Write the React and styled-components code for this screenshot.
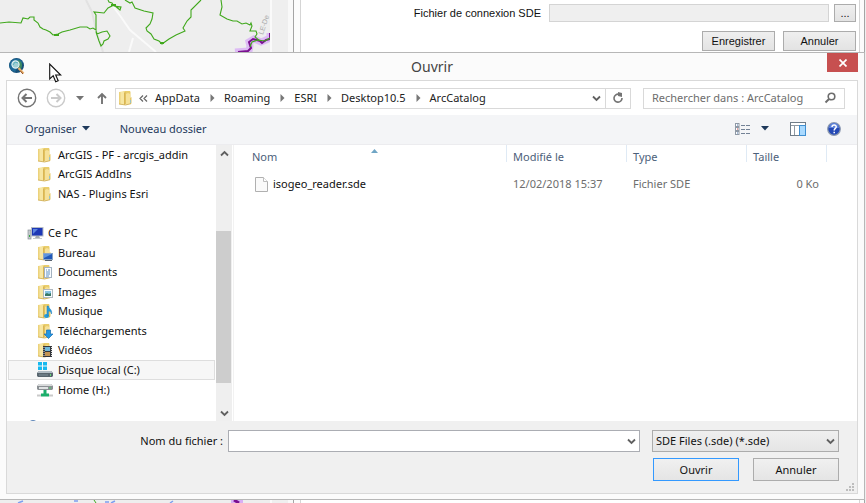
import React from "react";
import styled, { createGlobalStyle, css } from "styled-components";

const ui = `"Noto Sans", "Open Sans", sans-serif`;
const classic = `"Liberation Sans", Arial, sans-serif`;

const GlobalStyle = createGlobalStyle`
  *, *::before, *::after { box-sizing: border-box; }
  body { margin: 0; background: #efefef; }
  button, input, select { font: inherit; color: inherit; margin: 0; border-radius: 0; }
  svg { display: block; flex: none; }
`;

const Page = styled.div`
  display: flex;
  flex-direction: column;
  height: 100vh;
  overflow: hidden;
  font: 11px/16px ${ui};
  color: #111;
`;

/* ---------- application behind the dialog ---------- */

const Backdrop = styled.div`
  display: flex;
  flex: none;
  height: ${(p) => p.$height}px;
  overflow: hidden;
`;

const Gutter = styled.div`
  width: 23px;
  flex: none;
  background: #efefef;
  border-left: 2px solid #fafafa;
  border-right: 5px solid #f9f9f9;
`;

const SidePane = styled.div`
  flex: 1;
  display: flex;
  padding: 0 1px 0 6px;
  margin-right: 1px;
  background: #fcfcfc;
  border-left: 1px solid #a5a5a5;
  border-right: 1px solid #a5a5a5;
`;

const Form = styled.form`
  flex: 1;
  display: flex;
  flex-direction: column;
  gap: 9px;
  padding: 4px 3px 0;
  margin-right: 3px;
  background: #fff;
  border-left: 1px solid #d5d5d5;
  border-right: 1px solid #d5d5d5;
  font: 11px/16px ${classic};
`;

const FormRow = styled.div`
  display: flex;
  justify-content: flex-end;
  align-items: center;
  gap: ${(p) => p.$gap}px;
`;

const PathInput = styled.input`
  width: 280px;
  height: 18px;
  margin-left: 3px;
  padding: 0 4px;
  background: #efefef;
  border: 1px solid #d4d4d4;
`;

const ClassicButton = styled.button`
  width: ${(p) => p.$width}px;
  height: ${(p) => p.$height}px;
  padding: 0;
  line-height: 14px;
  background: linear-gradient(#efefef, #e3e3e3);
  border: 1px solid #acacac;
`;

/* ---------- dialog ---------- */

const Dialog = styled.section`
  flex: 1;
  min-height: 0;
  display: flex;
  flex-direction: column;
  position: relative;
  margin-right: 1px;
  padding: 0 6px 5px;
  background: #fbfbfb;
  border-top: 1px solid #b7b7b7;
  border-right: 1px solid #b7b7b7;
  border-bottom: 1px solid #b7b7b7;
`;

const TitleBar = styled.header`
  flex: none;
  height: 27px;
  display: grid;
  grid-template-columns: 1fr auto 1fr;
`;

const AppIconCell = styled.div`
  padding: 5px 2px;
`;

const Title = styled.h1`
  margin: 0;
  font: 14px/28px ${ui};
  color: #444;
`;

const CloseButton = styled.button`
  justify-self: end;
  width: 31px;
  height: 19px;
  padding: 0;
  display: flex;
  align-items: center;
  justify-content: center;
  background: #c75050;
  border: 0;
`;

const Pointer = styled.svg`
  position: absolute;
  left: 49px;
  top: 10px;
`;

const Frame = styled.div`
  flex: 1;
  min-height: 0;
  display: flex;
  flex-direction: column;
  background: #fff;
  border: 1px solid #d9d9d9;
`;

const NavRow = styled.div`
  flex: none;
  display: flex;
  align-items: center;
  height: 34px;
  padding: 0 12px 0 10px;
`;

const IconButton = styled.button`
  flex: none;
  display: flex;
  align-items: center;
  justify-content: center;
  width: ${(p) => p.$width || 20}px;
  height: 20px;
  padding: 0;
  background: none;
  border: 0;
`;

const HistoryButtons = styled.div`
  display: flex;
  align-items: center;
  width: 98px;
`;

const Address = styled.nav`
  flex: 1;
  display: flex;
  align-items: center;
  height: 21px;
  padding-left: 2px;
  border: 1px solid #d9d9d9;
`;

const Crumb = styled.button`
  padding: 0;
  line-height: 16px;
  color: #222;
  background: none;
  border: 0;
`;

const CrumbArrow = styled.svg`
  margin: 0 9px 0 10px;
`;

const Ancestors = styled.span`
  margin: 0 7px 0 5px;
`;

const RefreshCell = styled.div`
  margin-left: auto;
  display: flex;
  height: 19px;
  align-items: center;
`;

const Divider = styled.div`
  width: 1px;
  height: 19px;
  background: #d9d9d9;
`;

const Search = styled.label`
  display: flex;
  align-items: center;
  width: 202px;
  height: 21px;
  margin-left: 12px;
  padding: 0 8px;
  border: 1px solid #d9d9d9;
`;

const SearchInput = styled.input`
  flex: 1;
  min-width: 0;
  padding: 0;
  background: none;
  border: 0;
  outline: 0;
  &::placeholder { color: #6d6d6d; opacity: 1; }
`;

const Toolbar = styled.div`
  flex: none;
  display: flex;
  align-items: center;
  height: 30px;
  padding: 0 8px 2px 18px;
  background: #f4f5f7;
  border-bottom: 1px solid #ececef;
  color: #1e395b;
`;

const ToolButton = styled.button`
  display: flex;
  align-items: center;
  gap: 5px;
  padding: 0;
  margin-right: 30px;
  background: none;
  border: 0;
`;

const ViewTools = styled.div`
  margin-left: auto;
  display: flex;
  align-items: center;
`;

const Body = styled.div`
  flex: 1;
  min-height: 0;
  display: flex;
`;

const Sidebar = styled.nav`
  flex: none;
  display: flex;
  width: 227px;
  border-right: 1px solid #f2f2f2;
`;

const Tree = styled.ul`
  flex: 1;
  display: grid;
  grid-template-rows: repeat(14, 1fr) 2px;
  min-height: 0;
  margin: 0;
  padding: 0 1px;
  overflow: hidden;
  list-style: none;
`;

const TreeRow = styled.li`
  display: flex;
  min-height: 0;
  overflow: hidden;
  border: 1px solid transparent;
  ${(p) => p.$selected && css`
    background: #f7f7f7;
    border-color: #dedede;
  `}
`;

const TreeButton = styled.button`
  flex: 1;
  display: flex;
  align-items: center;
  gap: ${(p) => (p.$root ? 4 : 5)}px;
  padding: 0 0 0 ${(p) => (p.$root ? 18 : 28)}px;
  line-height: 16px;
  text-align: left;
  background: none;
  border: 0;
`;

const PeekRow = styled.li`
  padding-left: 21px;
`;

const ScrollBar = styled.div`
  display: flex;
  flex-direction: column;
  width: 16px;
  margin-right: 1px;
  background: #efefef;
`;

const ScrollStep = styled.button`
  display: flex;
  align-items: center;
  justify-content: center;
  height: 16px;
  padding: 0;
  background: none;
  border: 0;
`;

const Track = styled.div`
  flex: 1;
  display: grid;
  grid-template-rows: 70fr 152fr 22fr;
`;

const Thumb = styled.div`
  grid-row: 2;
  margin-right: 1px;
  background: #cdcdcd;
`;

const Listing = styled.div`
  flex: 1;
  min-width: 0;
`;

const FileTable = styled.table`
  width: 100%;
  table-layout: fixed;
  border-collapse: collapse;
  text-align: left;
`;

const Col = styled.col`
  width: ${(p) => (p.$width ? `${p.$width}px` : "auto")};
`;

const HeadCell = styled.th`
  height: 24px;
  padding: 0 6px 0 ${(p) => (p.$first ? 18 : 7)}px;
  font-weight: 400;
  color: #4c607a;
  background: linear-gradient(#dfeaf5, #dfeaf5) left top / ${(p) => (p.$first ? 0 : 1)}px 17px no-repeat;
`;

const HeadLabel = styled.span`
  display: flex;
  align-items: center;
  justify-content: space-between;
`;

const SortMark = styled.svg`
  align-self: flex-start;
  margin: 0 auto 0 94px;
`;

const Cell = styled.td`
  height: 30px;
  padding: 0 7px 0 ${(p) => (p.$first ? 21 : 7)}px;
  color: ${(p) => (p.$first ? "#111" : "#6d6d6d")};
  text-align: ${(p) => (p.$right ? "right" : "left")};
`;

const FileName = styled.span`
  display: flex;
  align-items: center;
  gap: 5px;
`;

const Footer = styled.form`
  flex: none;
  position: relative;
  display: flex;
  flex-direction: column;
  gap: 6px;
  height: 72px;
  padding: 9px 18px 0 16px;
  background: #f0f0f0;
`;

const FooterRow = styled.div`
  display: flex;
  align-items: center;
  justify-content: flex-end;
  gap: ${(p) => p.$gap}px;
`;

const NameLabel = styled.label`
  width: 200px;
  text-align: right;
`;

const NameBox = styled.div`
  flex: 1;
  display: flex;
  align-items: center;
  height: 22px;
  margin-right: 7px;
  background: #fff;
  border: 1px solid #abadb3;
`;

const NameInput = styled.input`
  flex: 1;
  min-width: 0;
  padding: 0 4px;
  background: none;
  border: 0;
  outline: 0;
`;

const TypeBox = styled.div`
  position: relative;
  width: 187px;
  height: 22px;
`;

const TypeSelect = styled.select`
  appearance: none;
  width: 100%;
  height: 22px;
  padding: 0 20px 0 3px;
  background: linear-gradient(#efefef, #e5e5e5);
  border: 1px solid #acacac;
`;

const SelectArrow = styled.svg`
  position: absolute;
  right: 4px;
  top: 8px;
  pointer-events: none;
`;

const DialogButton = styled.button`
  width: 86px;
  height: 23px;
  padding: 0;
  line-height: 20px;
  background: linear-gradient(#f0f0f0, #e5e5e5);
  border: 1px solid ${(p) => (p.$primary ? "#3399ff" : "#acacac")};
`;

const Grip = styled.svg`
  position: absolute;
  right: 3px;
  bottom: 2px;
`;

/* ---------- drawings ---------- */

const MapTop = () => (
  <svg width="270" height="52" viewBox="0 0 270 52" aria-hidden="true">
    <rect width="270" height="52" fill="#eeeeee" />
    <g fill="none" stroke="#fafafa" strokeWidth="2">
      <path d="M86 0 92 12 96 30 103 52" stroke="#e2e2e2" />
      <path d="M112 5 121 17 130 30 143 41 156 52M133 38 129 52" />
    </g>
    <text x="263" y="35" transform="rotate(-72 263 35)" fontFamily="Liberation Sans" fontSize="7" fill="#aaa">LE-De</text>
    <g fill="none" stroke="#d8aef5" strokeWidth="7" opacity=".8">
      <path d="M235 52 249 51 250 46 249 42 254 39 261 42 266 40 270 38V33" />
    </g>
    <path d="M238 52 248 51 251 48 249 42 253 39 260 41 262 43 266 40 270 39V33" fill="none" stroke="#7a1090" strokeWidth="2" />
    <g fill="none" stroke="#40a81c" strokeWidth="1.1">
      <path d="M0 23 9 22 21 23 23 18 28 19 30 17 34 17V20L38 23 40 27 43 29 46 30 50 32 53 35 58 34 62 32 70 30 80 27 87 27 90 29 93 28 96 30 96 15 94 12 104 13 108 8 114 5 120 10 121 7 114 6 112 3 109 2 108 0" />
      <path d="M96 31 97 34 102 32 107 31 110 36 108 39 104 41 103 44 101 46 99 41 96 32" />
      <path d="M125 0 130 3 132 2 135 8 144 11 153 13 152 19 150 24 146 28 147 31 151 34 154 39 159 41 162 44 169 39 176 35 185 31 183 28 187 21 191 17 191 10 201 0" />
      <path d="M221 0 222 7 220 15 227 19 233 21 237 21 242 24 246 23 250 25 251 23 252 26 250 31 256 31 257 34 255 37 260 41 M250 47 252 42 258 40 265 41 270 38" />
      <path d="M54 35h5M160 43h4M111 5h5" strokeWidth="2" />
    </g>
  </svg>
);

const MapBottom = () => (
  <svg width="270" height="3" viewBox="0 0 270 3" aria-hidden="true">
    <rect width="270" height="3" fill="#eeeeee" />
    <path d="M18 3 23 1M74 1h4M105 2h4M111 3l4-2M170 3l3-2" stroke="#7d9ff0" strokeWidth="1.5" />
    <path d="M94 0l2 3" stroke="#40a81c" />
    <path d="M231 1h12" stroke="#d8aef5" strokeWidth="5" />
    <path d="M234 0l5 3" stroke="#7a1090" strokeWidth="3" />
  </svg>
);

const Globe = () => (
  <svg width="17" height="17" viewBox="0 0 17 17" aria-hidden="true">
    <circle cx="8.5" cy="7.5" r="7.5" fill="#174f77" />
    <path d="M2 5C4 0 12-1 15 5L11 7 7 14C3 13 0 9 2 5Z" fill="#1d6a98" />
    <path d="M10 2c4 1 5 5 3 9l-3-2Z" fill="#3c8a62" />
    <circle cx="7.5" cy="6.500" r="3.600" fill="#9fd0d4" stroke="#e4f4f4" strokeWidth="1.1" />
    <path d="M5 7 7 4 10 5" stroke="#5eb1bd" fill="none" />
    <path d="M10.5 10 15.5 15.5" stroke="#e9b06a" strokeWidth="2.2" />
    <path d="M12 12.5 15 16" stroke="#8b4c27" strokeWidth="1" />
  </svg>
);

const folderArt = {
  desktop: (
    <g><rect x="6.5" y="8.5" width="9" height="6" fill="#2058b8" stroke="#87a4c8" /><path d="M7 9h8L7 13Z" fill="#5e95de" /><path d="M8 15.500h7" stroke="#59636f" /></g>
  ),
  documents: (
    <g><rect x="7.500" y="3.500" width="7" height="10" fill="#f8fbfe" stroke="#a4b2c0" /><path d="M9 6h1M9 8h4M9 10h4M9 12h3" stroke="#5e91c5" /><path d="M11 6h2" stroke="#5e91c5" /></g>
  ),
  images: (
    <g><rect x="6.500" y="5.500" width="9" height="8" fill="#f8fbfe" stroke="#b0b8bf" /><rect x="8" y="7" width="6" height="5" fill="#86c4e3" /><path d="M8 12v-2l2-1 2 1 2-1v3Z" fill="#397967" /></g>
  ),
  music: (
    <g fill="#269ee0"><ellipse cx="9.500" cy="13" rx="2.500" ry="2" /><path d="M10 3h1.500c0 3 4 3 3 8-.5-2-1-3-3-3v5H10Z" stroke="#1c79b8" strokeWidth=".5" /></g>
  ),
  download: <path d="M9.500 7h4v4H16l-4.500 4.500L7 11h2.500Z" fill="#2497e3" stroke="#176eb5" strokeWidth=".7" />,
  video: (
    <g><rect x="6" y="4" width="9" height="11" fill="#34373c" /><rect x="8" y="5" width="5" height="4" fill="#6db6d9" /><rect x="8" y="10" width="5" height="4" fill="#c39453" /><path d="M7 5v10M14.500 5v10" stroke="#e0e0e0" strokeDasharray="1 1" /></g>
  ),
};

const Folder = ({ kind }) => (
  <svg width="16" height="16" viewBox="0 0 16 16" aria-hidden="true">
    <path d="M5 1h7l.5 1v12H5Z" fill="#e9cd6c" />
    <path d="M1 2l5-1 1 1v13l-6-1Z" fill="#f7e6a2" />
    <path d="M1 2h1.500v12.200L1 14Z" fill="#ecd27c" />
    <path d="M6 2.500 7.500 2v13L6 14.500Z" fill="#d9b553" />
    <path d="M8 4l2-1 2 1v10l-4 1Z" fill="#f6e199" />
    <path d="M12 8l1.500-1v6.500L12 14Z" fill="#e6c867" />
    <path d="M1 14l6.500 1 5.500-1.300" fill="none" stroke="#cdaa4c" strokeWidth=".8" />
    {kind ? folderArt[kind] : <path d="M12.500 10v3" stroke="#9ac2c4" />}
  </svg>
);

const Computer = () => (
  <svg width="17" height="16" viewBox="0 0 17 16" aria-hidden="true">
    <rect x="1" y="5" width="3" height="9" fill="#c4c9cc" stroke="#8a9298" strokeWidth=".7" />
    <path d="M2 11h1" stroke="#35a345" strokeWidth="2" />
    <rect x="4.500" y="2.500" width="11.500" height="8.500" fill="#1d37b5" stroke="#b5bcc5" />
    <path d="M6 4h5L6 9Z" fill="#5c84df" />
    <path d="M9 11h3l1 2H8Z" fill="#a3a9ae" /><path d="M6 13.500h9" stroke="#c4c9cc" />
  </svg>
);

const Drive = ({ network }) => (
  <svg width="16" height="16" viewBox="0 0 16 16" aria-hidden="true">
    {network ? (
      <g>
        <path d="M2 2h12l2 2v3l-1 1H1L0 7V4Z" fill="#8b9094" /><path d="M2 2h12l2 2H0Z" fill="#d8dadb" />
        <rect x="2" y="5" width="9" height="2" fill="#dfe2e3" /><path d="M13 5v2" stroke="#45d465" />
        <path d="M8 8v4M4 13h8" stroke="#1cae6b" strokeWidth="3" /><path d="M0 13.500h4M12 13.500h4" stroke="#c9c9c9" strokeWidth="2" />
      </g>
    ) : (
      <g>
        <path d="M1 0h4v3.500H1ZM6 0h4v3.500H6ZM1 4.500h4V8H1ZM6 4.500h4V8H6Z" fill="#17b9ef" />
        <path d="M2 9h12l2 2v3l-1 1H1l-1-1v-3Z" fill="#59666f" /><path d="M2 9h12l2 2H0Z" fill="#b3bdc5" />
        <path d="M2 13h9" stroke="#81909b" /><path d="M13.500 12v2" stroke="#67da76" />
      </g>
    )}
  </svg>
);

const PageIcon = () => (
  <svg width="13" height="15" viewBox="0 0 13 15" aria-hidden="true">
    <path d="M.5 .5h8l4 4v10H.5Z" fill="#fafafa" stroke="#b0b0b0" />
    <path d="M8.500 .5v4h4" fill="#fff" stroke="#bdbdbd" />
  </svg>
);

const Chevron = ({ up, ...rest }) => (
  <svg width="9" height="7" viewBox="0 0 9 7" aria-hidden="true" {...rest}>
    <path d={up ? "M1 5.500 4.500 2 8 5.500" : "M1 1.500 4.500 5 8 1.500"} fill="none" stroke="#606060" strokeWidth="1.8" />
  </svg>
);

const Caret = ({ color = "#1e395b" }) => (
  <svg width="8" height="5" viewBox="0 0 8 5" aria-hidden="true">
    <path d="M0 0h8L4 4.500Z" fill={color} />
  </svg>
);

const RoundArrow = ({ forward }) => {
  const color = forward ? "#cacaca" : "#747474";
  return (
    <svg width="20" height="20" viewBox="0 0 20 20" aria-hidden="true">
      <circle cx="10" cy="10" r="8.700" fill="none" stroke={color} strokeWidth="1.400" />
      <path d={forward ? "M5 10h9M10.500 6l4 4-4 4" : "M15 10H6M9.500 6l-4 4 4 4"} fill="none" stroke={color} strokeWidth="2" />
    </svg>
  );
};

/* ---------- content ---------- */

const crumbs = ["AppData", "Roaming", "ESRI", "Desktop10.5", "ArcCatalog"];

const places = [
  { label: "ArcGIS - PF - arcgis_addin", icon: <Folder /> },
  { label: "ArcGIS AddIns", icon: <Folder /> },
  { label: "NAS - Plugins Esri", icon: <Folder /> },
  null,
  { label: "Ce PC", icon: <Computer />, root: true },
  { label: "Bureau", icon: <Folder kind="desktop" /> },
  { label: "Documents", icon: <Folder kind="documents" /> },
  { label: "Images", icon: <Folder kind="images" /> },
  { label: "Musique", icon: <Folder kind="music" /> },
  { label: "Téléchargements", icon: <Folder kind="download" /> },
  { label: "Vidéos", icon: <Folder kind="video" /> },
  { label: "Disque local (C:)", icon: <Drive />, selected: true },
  { label: "Home (H:)", icon: <Drive network /> },
  null,
];

export default function App() {
  return (
    <Page>
      <GlobalStyle />
      <Backdrop $height={52}>
        <MapTop />
        <Gutter />
        <SidePane>
          <Form>
            <FormRow $gap={5}>
              <label htmlFor="connection">Fichier de connexion SDE</label>
              <PathInput id="connection" readOnly />
              <ClassicButton type="button" $width={22} $height={18}>...</ClassicButton>
            </FormRow>
            <FormRow $gap={8}>
              <ClassicButton type="button" $width={73} $height={20}>Enregistrer</ClassicButton>
              <ClassicButton type="button" $width={73} $height={20}>Annuler</ClassicButton>
            </FormRow>
          </Form>
        </SidePane>
      </Backdrop>

      <Dialog role="dialog" aria-labelledby="dialog-title">
        <TitleBar>
          <AppIconCell><Globe /></AppIconCell>
          <Title id="dialog-title">Ouvrir</Title>
          <CloseButton aria-label="Fermer">
            <svg width="8" height="8" viewBox="0 0 8 8"><path d="M.5.5l7 7M7.500.5l-7 7" stroke="#fff" strokeWidth="1.700" /></svg>
          </CloseButton>
        </TitleBar>

        <Frame>
          <NavRow>
            <HistoryButtons>
              <IconButton aria-label="Précédent"><RoundArrow /></IconButton>
              <IconButton aria-label="Suivant" $width={38}><RoundArrow forward /></IconButton>
              <IconButton aria-label="Emplacements récents" $width={10}><Caret color="#747474" /></IconButton>
              <IconButton aria-label="Dossier parent" $width={34}>
                <svg width="10" height="12" viewBox="0 0 10 12"><path d="M5 12V2M1 6l4-4 4 4" fill="none" stroke="#747474" strokeWidth="1.900" /></svg>
              </IconButton>
            </HistoryButtons>
            <Address aria-label="Adresse">
              <Folder />
              <Ancestors>
                <svg width="9" height="7" viewBox="0 0 9 7"><path d="M4 .5 1 3.500l3 3M8 .5 5 3.500l3 3" fill="none" stroke="#666" strokeWidth="1.200" /></svg>
              </Ancestors>
              {crumbs.map((name, i) => (
                <React.Fragment key={name}>
                  {i > 0 && <CrumbArrow width="5" height="8" viewBox="0 0 5 8"><path d="M.5 0 4.500 4 .5 8Z" fill="#777" /></CrumbArrow>}
                  <Crumb>{name}</Crumb>
                </React.Fragment>
              ))}
              <RefreshCell>
                <IconButton aria-label="Historique" $width={18}><Chevron /></IconButton>
                <Divider />
                <IconButton aria-label="Actualiser" $width={24}>
                  <svg width="12" height="12" viewBox="0 0 12 12"><path d="M7 2.300A4 4 0 1 0 10 6" fill="none" stroke="#747474" strokeWidth="1.600" /><path d="M6 0 10 1v4L6 4Z" fill="#747474" /></svg>
                </IconButton>
              </RefreshCell>
            </Address>
            <Search>
              <SearchInput aria-label="Rechercher" placeholder="Rechercher dans : ArcCatalog" />
              <svg width="12" height="12" viewBox="0 0 12 12" aria-hidden="true"><circle cx="7.500" cy="4.500" r="3.300" fill="none" stroke="#6d6d6d" strokeWidth="1.600" /><path d="M5 7 1.500 10.500" stroke="#6d6d6d" strokeWidth="1.900" /></svg>
            </Search>
          </NavRow>

          <Toolbar>
            <ToolButton>Organiser <Caret /></ToolButton>
            <ToolButton>Nouveau dossier</ToolButton>
            <ViewTools>
              <IconButton aria-label="Affichage" $width={16}>
                <svg width="16" height="12" viewBox="0 0 16 12">
                  <g fill="#fff" stroke="#8f99a6"><rect x=".5" y=".5" width="3.500" height="3" /><rect x=".5" y="4.500" width="3.500" height="3" /><rect x=".5" y="8.500" width="3.500" height="3" /></g>
                  <path d="M2 2h1M2 10h1" stroke="#4e79ae" /><path d="M2 6h1" stroke="#c44" />
                  <path d="M6 2.500h4M11 2.500h4M6 6.500h4M11 6.500h4M6 10.500h4M11 10.500h4" stroke="#738296" />
                </svg>
              </IconButton>
              <IconButton aria-label="Autres affichages" $width={27}><Caret /></IconButton>
              <IconButton aria-label="Volet de visualisation" $width={40}>
                <svg width="16" height="14" viewBox="0 0 16 14"><rect x=".5" y=".5" width="15" height="13" fill="#fff" stroke="#6f7c88" /><path d="M1 3.500h14M4.500 4v9" stroke="#8f99a3" /><rect x="9.500" y="3.500" width="6" height="10" fill="#aadaff" stroke="#408fd1" /></svg>
              </IconButton>
              <IconButton aria-label="Aide" $width={31}>
                <svg width="14" height="14" viewBox="0 0 14 14"><circle cx="7" cy="7" r="6.300" fill="#2448b5" stroke="#8d9aae" strokeWidth="1.200" /><path d="M2 6a5 5 0 0 1 10 0Z" fill="#5d82da" /><path d="M5 5c0-3 4.500-2.500 4.200 0C9 6.500 7.200 6.500 7.200 8.500M7.200 9.800v1.500" fill="none" stroke="#fff" strokeWidth="1.500" /></svg>
              </IconButton>
            </ViewTools>
          </Toolbar>

          <Body>
            <Sidebar aria-label="Emplacements">
              <Tree>
                {places.map((place, i) => (
                  <TreeRow key={i} $selected={place?.selected}>
                    {place && <TreeButton $root={place.root}>{place.icon}{place.label}</TreeButton>}
                  </TreeRow>
                ))}
                <PeekRow><svg width="8" height="2" viewBox="0 0 8 2"><path d="M1 2q3-2 6 0" fill="#5e86b8" /></svg></PeekRow>
              </Tree>
              <ScrollBar>
                <ScrollStep aria-label="Monter"><Chevron up /></ScrollStep>
                <Track><Thumb /></Track>
                <ScrollStep aria-label="Descendre"><Chevron /></ScrollStep>
              </ScrollBar>
            </Sidebar>
            <Listing>
              <FileTable>
                <colgroup><Col /><Col $width={120} /><Col $width={120} /><Col $width={80} /><Col $width={31} /></colgroup>
                <thead>
                  <tr>
                    <HeadCell $first>
                      <HeadLabel>Nom<SortMark width="7" height="4" viewBox="0 0 7 4"><path d="M0 4 3.500 0 7 4Z" fill="#6fa5c5" /></SortMark></HeadLabel>
                    </HeadCell>
                    <HeadCell>Modifié le</HeadCell>
                    <HeadCell>Type</HeadCell>
                    <HeadCell>Taille</HeadCell>
                    <HeadCell />
                  </tr>
                </thead>
                <tbody>
                  <tr>
                    <Cell $first><FileName><PageIcon />isogeo_reader.sde</FileName></Cell>
                    <Cell>12/02/2018 15:37</Cell>
                    <Cell>Fichier SDE</Cell>
                    <Cell $right>0 Ko</Cell>
                    <Cell />
                  </tr>
                </tbody>
              </FileTable>
            </Listing>
          </Body>

          <Footer>
            <FooterRow $gap={5}>
              <NameLabel htmlFor="filename">Nom du fichier :</NameLabel>
              <NameBox>
                <NameInput id="filename" />
                <IconButton type="button" aria-label="Noms récents" $width={16}><Chevron /></IconButton>
              </NameBox>
              <TypeBox>
                <TypeSelect aria-label="Type de fichier"><option>SDE Files (.sde) (*.sde)</option></TypeSelect>
                <SelectArrow as={Chevron} />
              </TypeBox>
            </FooterRow>
            <FooterRow $gap={14}>
              <DialogButton type="button" $primary>Ouvrir</DialogButton>
              <DialogButton type="button">Annuler</DialogButton>
            </FooterRow>
            <Grip width="8" height="8" viewBox="0 0 8 8" aria-hidden="true"><path d="M6 0h2v2H6ZM3 3h2v2H3ZM6 3h2v2H6ZM0 6h2v2H0ZM3 6h2v2H3ZM6 6h2v2H6Z" fill="#bdbdbd" /></Grip>
          </Footer>
        </Frame>

        <Pointer width="13" height="20" viewBox="0 0 13 20" aria-hidden="true">
          <path d="M.7 1v15l3.500-3.300 2.500 6 2.500-1-2.500-5.700h5Z" fill="#fff" stroke="#111" strokeWidth="1.100" />
        </Pointer>
      </Dialog>

      <Backdrop $height={3}>
        <MapBottom />
        <Gutter />
        <SidePane><Form as="div" /></SidePane>
      </Backdrop>
    </Page>
  );
}
